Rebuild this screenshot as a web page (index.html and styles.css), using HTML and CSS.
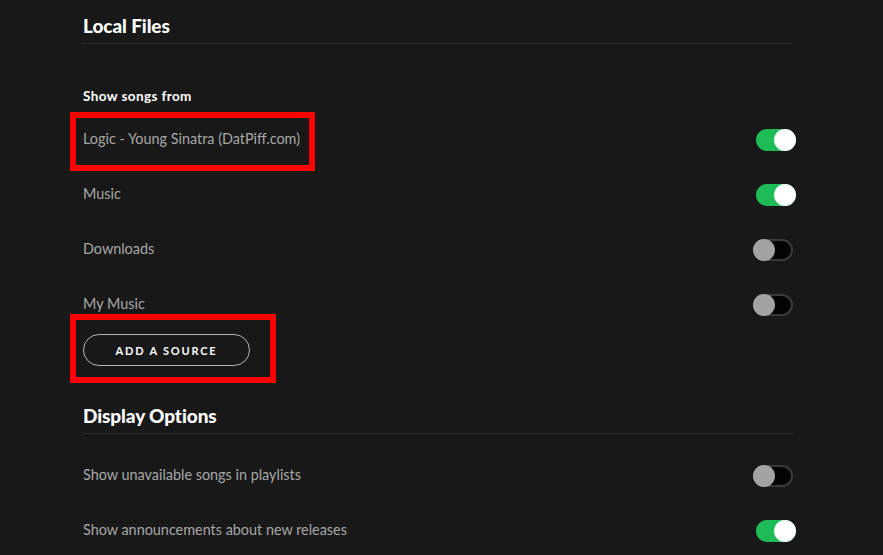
FILE: index.html
```html
<!DOCTYPE html>
<html>
<head>
<meta charset="utf-8">
<link rel="stylesheet" href="styles.css">
</head>
<body>
<main class="settings">
  <section class="section">
    <h2 class="section-title">Local Files</h2>
    <h3 class="subhead">Show songs from</h3>
    <div class="row"><span class="label">Logic - Young Sinatra (DatPiff.com)</span><span class="toggle on"><span class="knob"></span></span></div>
    <div class="row"><span class="label">Music</span><span class="toggle on"><span class="knob"></span></span></div>
    <div class="row"><span class="label">Downloads</span><span class="toggle off"><span class="knob"></span></span></div>
    <div class="row"><span class="label">My Music</span><span class="toggle off"><span class="knob"></span></span></div>
    <button class="btn-outline">ADD A SOURCE</button>
  </section>
  <section class="section section-second">
    <h2 class="section-title">Display Options</h2>
    <div class="row row-first"><span class="label">Show unavailable songs in playlists</span><span class="toggle off"><span class="knob"></span></span></div>
    <div class="row"><span class="label">Show announcements about new releases</span><span class="toggle on"><span class="knob"></span></span></div>
  </section>
</main>
<div class="highlight highlight-source"></div>
<div class="highlight highlight-button"></div>
</body>
</html>
```

FILE: styles.css
```css
html, body {
  margin: 0;
  padding: 0;
  background: #181818;
  height: 100%;
  overflow: hidden;
}
body {
  font-family: Lato, "Noto Sans", sans-serif;
  color: #fff;
  position: relative;
}
.settings {
  width: 710px;
  margin-left: 83px;
}
.section-title {
  margin: 0;
  padding-top: 12px;
  padding-bottom: 3px;
  font-size: 19px;
  line-height: 28px;
  font-weight: 900;
  color: #fff;
  border-bottom: 1px solid #2e2e2e;
  letter-spacing: -0.1px;
}
.subhead {
  margin: 42px 0 6px;
  font-size: 13.5px;
  line-height: 20px;
  font-weight: 700;
  color: #fff;
  letter-spacing: 0.4px;
}
.row {
  height: 55px;
  display: flex;
  align-items: center;
  justify-content: space-between;
}
.label {
  font-size: 14.4px;
  line-height: 20px;
  margin-top: -1px;
  color: #a7a7a7;
}
.toggle {
  box-sizing: border-box;
  width: 40px;
  height: 22px;
  border-radius: 11px;
  position: relative;
  display: block;
}
.toggle.on {
  background: #1ebc57;
  margin-right: -3px;
}
.toggle.off {
  background: #040404;
  border: 2px solid #3a3a3a;
}
.knob {
  position: absolute;
  width: 22px;
  height: 22px;
  border-radius: 50%;
  top: 0;
}
.toggle.on .knob {
  right: 0;
  background: #fff;
}
.toggle.off .knob {
  left: -2px;
  top: -2px;
  background: #a3a3a3;
}
.btn-outline {
  display: block;
  margin-top: 2px;
  width: 167px;
  height: 32px;
  border: 1px solid #b3b3b3;
  border-radius: 16px;
  background: transparent;
  color: #fff;
  font-family: Lato, "Noto Sans", sans-serif;
  font-weight: 700;
  font-size: 11px;
  letter-spacing: 1.8px;
  padding: 0;
}
.section-second {
  margin-top: 24px;
}
.row-first {
  margin-top: 14px;
}
.highlight {
  position: absolute;
  box-sizing: border-box;
  border: 6px solid #fe0000;
}
.highlight-source {
  left: 70px;
  top: 112px;
  width: 245px;
  height: 59px;
}
.highlight-button {
  left: 70px;
  top: 314px;
  width: 206px;
  height: 69px;
}
```
